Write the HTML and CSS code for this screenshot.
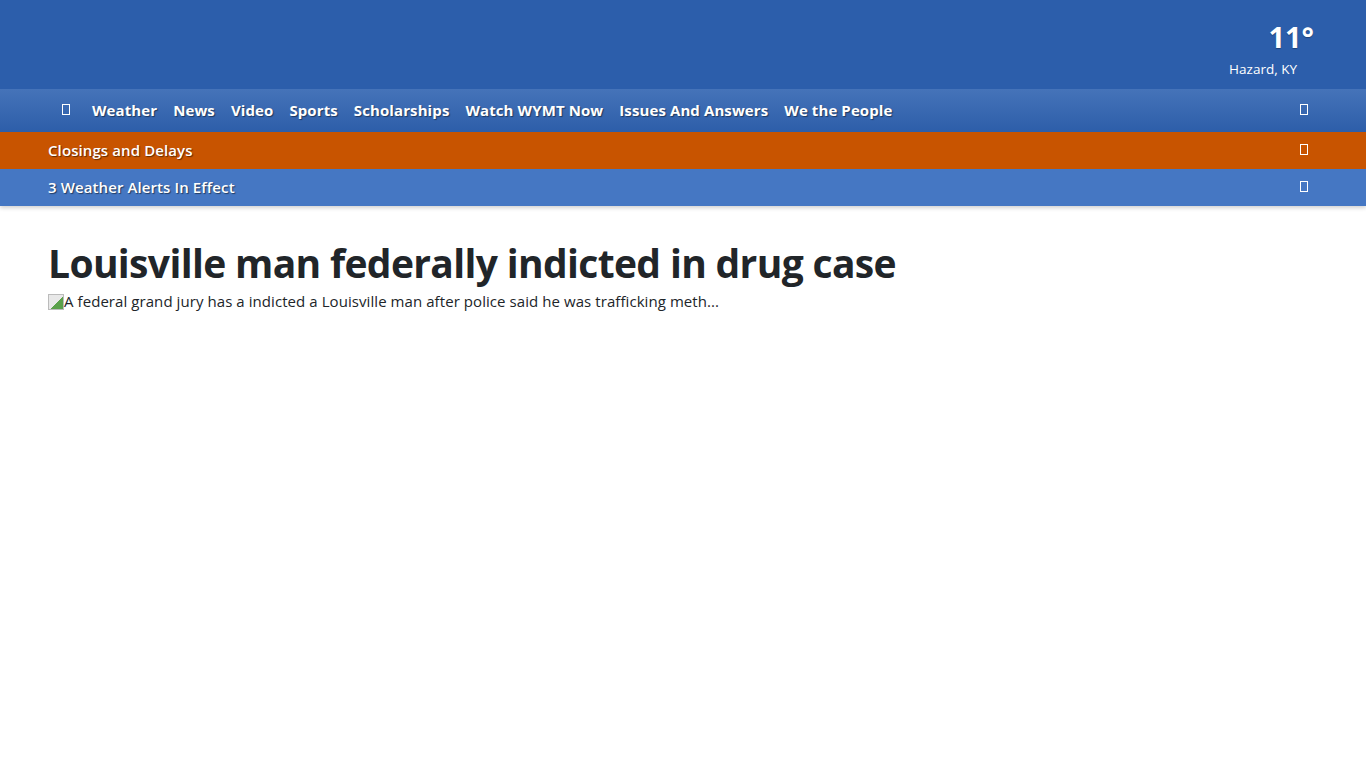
FILE: index.html
```html
<!DOCTYPE html>
<html lang="en">
<head>
<meta charset="utf-8">
<title>WYMT</title>
<link rel="stylesheet" href="styles.css">
</head>
<body>
<header class="site-header">
  <div class="topbar">
    <div class="wx">
      <div class="wx-temp">11°</div>
      <div class="wx-loc">Hazard, KY</div>
    </div>
  </div>
  <nav class="mainnav">
    <ul class="nav-list">
      <li class="nav-icon"><span class="tofu"></span></li>
      <li><a href="#">Weather</a></li>
      <li><a href="#">News</a></li>
      <li><a href="#">Video</a></li>
      <li><a href="#">Sports</a></li>
      <li><a href="#">Scholarships</a></li>
      <li><a href="#">Watch WYMT Now</a></li>
      <li><a href="#">Issues And Answers</a></li>
      <li><a href="#">We the People</a></li>
    </ul>
    <span class="tofu nav-right"></span>
  </nav>
  <div class="bar bar-closings">
    <span class="bar-text">Closings and Delays</span>
    <span class="tofu"></span>
  </div>
  <div class="bar bar-alerts">
    <span class="bar-text">3 Weather Alerts In Effect</span>
    <span class="tofu"></span>
  </div>
</header>
<main class="content">
  <h1 class="headline">Louisville man federally indicted in drug case</h1>
  <p class="caption"><span class="broken-img"></span>A federal grand jury has a indicted a Louisville man after police said he was trafficking meth...</p>
</main>
</body>
</html>
```
FILE: styles.css
```css
* { box-sizing: border-box; }
html, body { margin: 0; padding: 0; }
body {
  font-family: "Open Sans", "Noto Sans", sans-serif;
  color: #212529;
  background: #fff;
}
.site-header {
  box-shadow: 0 2px 4px rgba(0,0,0,0.18);
}
.topbar {
  height: 89px;
  background: #2c5eab;
  display: flex;
  justify-content: flex-end;
  padding-right: 52px;
}
.wx {
  display: flex;
  flex-direction: column;
  align-items: flex-end;
  padding-top: 18px;
  color: #fff;
}
.wx-temp {
  font-size: 29px;
  font-weight: 700;
  line-height: 38px;
  margin-right: 0;
  text-shadow: 0 1px 1px rgba(0,0,0,0.3);
}
.wx-loc {
  font-size: 13.5px;
  line-height: 18px;
  margin-top: 4px;
  margin-right: 17px;
}
.mainnav {
  height: 43px;
  background: linear-gradient(#4573b9, #2d5ea9);
  display: flex;
  align-items: center;
  justify-content: space-between;
  padding: 0 58px 2px 62px;
}
.nav-list {
  list-style: none;
  margin: 0;
  padding: 0;
  display: flex;
  align-items: center;
  gap: 16px;
}
.nav-list a {
  color: #fff;
  text-decoration: none;
  font-weight: 700;
  font-size: 15px;
  letter-spacing: 0.1px;
  text-shadow: 1px 1px 1px rgba(0,0,0,0.45);
}
.nav-icon { margin-right: 6px; display: flex; }
.tofu {
  display: inline-block;
  width: 8px;
  height: 11px;
  border: 1px solid #fff;
}
.bar {
  display: flex;
  align-items: center;
  justify-content: space-between;
  height: 37px;
  padding: 0 58px 2px 48px;
  color: #fff;
}
.bar-closings { background: #c85400; }
.bar-alerts { background: #4577c3; }
.bar-text {
  font-size: 15px;
  font-weight: 600;
  letter-spacing: 0.1px;
  text-shadow: 1px 1px 1px rgba(0,0,0,0.5);
}
.content {
  padding: 33px 48px;
}
.headline {
  margin: 0;
  font-size: 39px;
  font-weight: 700;
  line-height: 48px;
  letter-spacing: -0.65px;
  color: #212529;
}
.caption {
  margin: 3px 0 0;
  font-size: 15px;
  line-height: 22px;
  letter-spacing: 0.07px;
  color: #212529;
}
.broken-img {
  display: inline-block;
  width: 16px;
  height: 16px;
  vertical-align: -3px;
  background: linear-gradient(135deg, #e8e8e8 55%, #5aa04a 56%);
  border: 1px solid #bbb;
}
```
